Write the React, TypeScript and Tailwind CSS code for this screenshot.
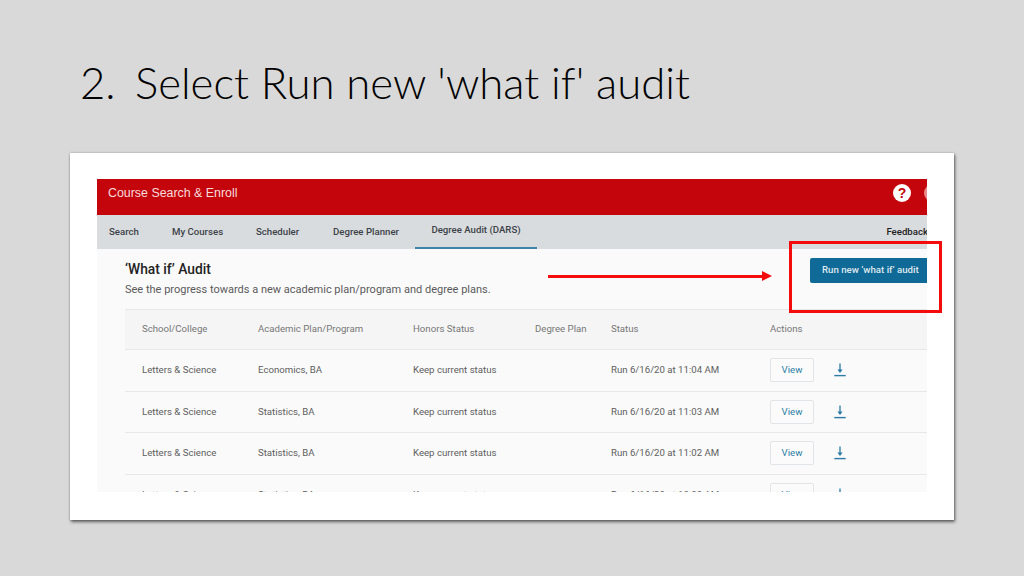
const tabs = [
  { label: "Search", className: "w-[75px] pl-3" },
  { label: "My Courses", className: "w-[84px]" },
  { label: "Scheduler", className: "w-[77px]" },
  { label: "Degree Planner", className: "w-[82px]" },
];

const rows = [
  { plan: "Economics, BA", status: "Run 6/16/20 at 11:04 AM" },
  { plan: "Statistics, BA", status: "Run 6/16/20 at 11:03 AM" },
  { plan: "Statistics, BA", status: "Run 6/16/20 at 11:02 AM" },
  { plan: "Statistics, BA", status: "Run 6/16/20 at 10:00 AM" },
];

const gridCols = "grid grid-cols-[116px_155px_122px_76px_159px_1fr] items-center pl-[17px]";

function DownloadIcon() {
  return (
    <svg width="12" height="14" viewBox="0 0 12 14" className="text-[#2a7ca6]">
      <path d="M6 0.5V9" stroke="currentColor" strokeWidth="1.3" fill="none" />
      <path d="M3.4 6.6L6 10L8.6 6.6Z" fill="currentColor" />
      <path d="M0.3 12.6H11.7" stroke="currentColor" strokeWidth="1.4" fill="none" />
    </svg>
  );
}

function AuditRow({ plan, status }: { plan: string; status: string }) {
  return (
    <div className={`${gridCols} h-[41.5px] shrink-0 border-b border-[#e6e8e9] text-[9.65px] text-[#5e5e5e]`}>
      <span>Letters &amp; Science</span>
      <span>{plan}</span>
      <span>Keep current status</span>
      <span />
      <span>{status}</span>
      <div className="flex items-center gap-[20px]">
        <div className="flex h-6 w-11 items-center justify-center rounded-[2px] border border-[#e2e5e7] bg-[#fbfbfb] text-[#2a7ca6]">
          View
        </div>
        <DownloadIcon />
      </div>
    </div>
  );
}

export default function App() {
  return (
    <div className="flex h-[576px] w-[1024px] flex-col overflow-hidden bg-[#d9d9d9] font-['Roboto',sans-serif]">
      <h1 className="flex h-[153px] pl-20 pt-[52px] font-['Lato',sans-serif] text-[43.7px] font-light leading-[60px] whitespace-pre text-[#000]">
        <span className="w-[55px]">2.</span>
        <span>Select Run new 'what if' audit</span>
      </h1>

      <div className="relative ml-[70px] h-[367px] w-[884px] bg-white pl-[27px] pt-[26px] shadow-[1px_2px_3px_rgba(0,0,0,0.55),0_0_2px_rgba(0,0,0,0.25)]">
        <div className="flex h-[313px] w-[830px] flex-col overflow-hidden bg-[#fafafa]">
          <div className="flex h-9 shrink-0 items-center justify-between overflow-hidden bg-[#c5050c] pb-2 pl-[11px] font-['Liberation_Sans',sans-serif] text-[12.4px] text-[#f6dcdc]">
            <span>Course Search &amp; Enroll</span>
            <div className="mr-[-15px] flex items-center gap-[13px]">
              <div className="flex h-[18px] w-[18px] items-center justify-center rounded-full bg-white text-[14px] font-bold text-[#c5050c]">
                ?
              </div>
              <div className="h-[18px] w-[18px] rounded-full bg-[#e88a8a]" />
            </div>
          </div>

          <div className="flex h-[34px] shrink-0 items-center justify-between bg-[#d9dcdf] text-[9.65px] font-medium text-[#3c4247]">
            <div className="flex h-full items-center">
              {tabs.map((tab) => (
                <span key={tab.label} className={tab.className}>
                  {tab.label}
                </span>
              ))}
              <span className="flex h-full w-[122px] items-center justify-center border-b-2 border-[#3d84a8] pb-px">
                Degree Audit (DARS)
              </span>
            </div>
            <span className="mr-[-1px] text-[#222]">Feedback</span>
          </div>

          <div className="flex h-[60px] shrink-0 justify-between pl-7">
            <div className="pt-[11px]">
              <div className="text-[13.8px] font-medium leading-[18px] text-[#222]">‘What if’ Audit</div>
              <div className="mt-[5px] text-[11px] leading-[14px] text-[#5a5a5a]">
                See the progress towards a new academic plan/program and degree plans.
              </div>
            </div>
            <div className="mr-[-4px] mt-[9px] flex h-[25px] w-[121px] items-center rounded-[2px] bg-[#0f6a97] pl-3 text-[9.65px] font-medium text-[#dfe9ef]">
              Run new ‘what if’ audit
            </div>
          </div>

          <div className="ml-7 flex flex-col">
            <div className={`${gridCols} h-[41px] shrink-0 border-y border-[#e6e8e9] bg-[#f5f5f5] text-[9.65px] text-[#777]`}>
              <span>School/College</span>
              <span>Academic Plan/Program</span>
              <span>Honors Status</span>
              <span>Degree Plan</span>
              <span>Status</span>
              <span>Actions</span>
            </div>
            {rows.map((row) => (
              <AuditRow key={row.status} plan={row.plan} status={row.status} />
            ))}
          </div>
        </div>

        {/* annotations drawn over the screenshot */}
        <div className="absolute left-[478px] top-[118px] flex items-center">
          <div className="h-[3px] w-[214px] bg-[#f40b0b]" />
          <div className="h-0 w-0 border-y-[5px] border-l-[10px] border-y-transparent border-l-[#f40b0b]" />
        </div>
        <div className="absolute left-[719px] top-[88px] h-[72px] w-[153px] border-[3px] border-[#f40b0b]" />
      </div>
    </div>
  );
}
